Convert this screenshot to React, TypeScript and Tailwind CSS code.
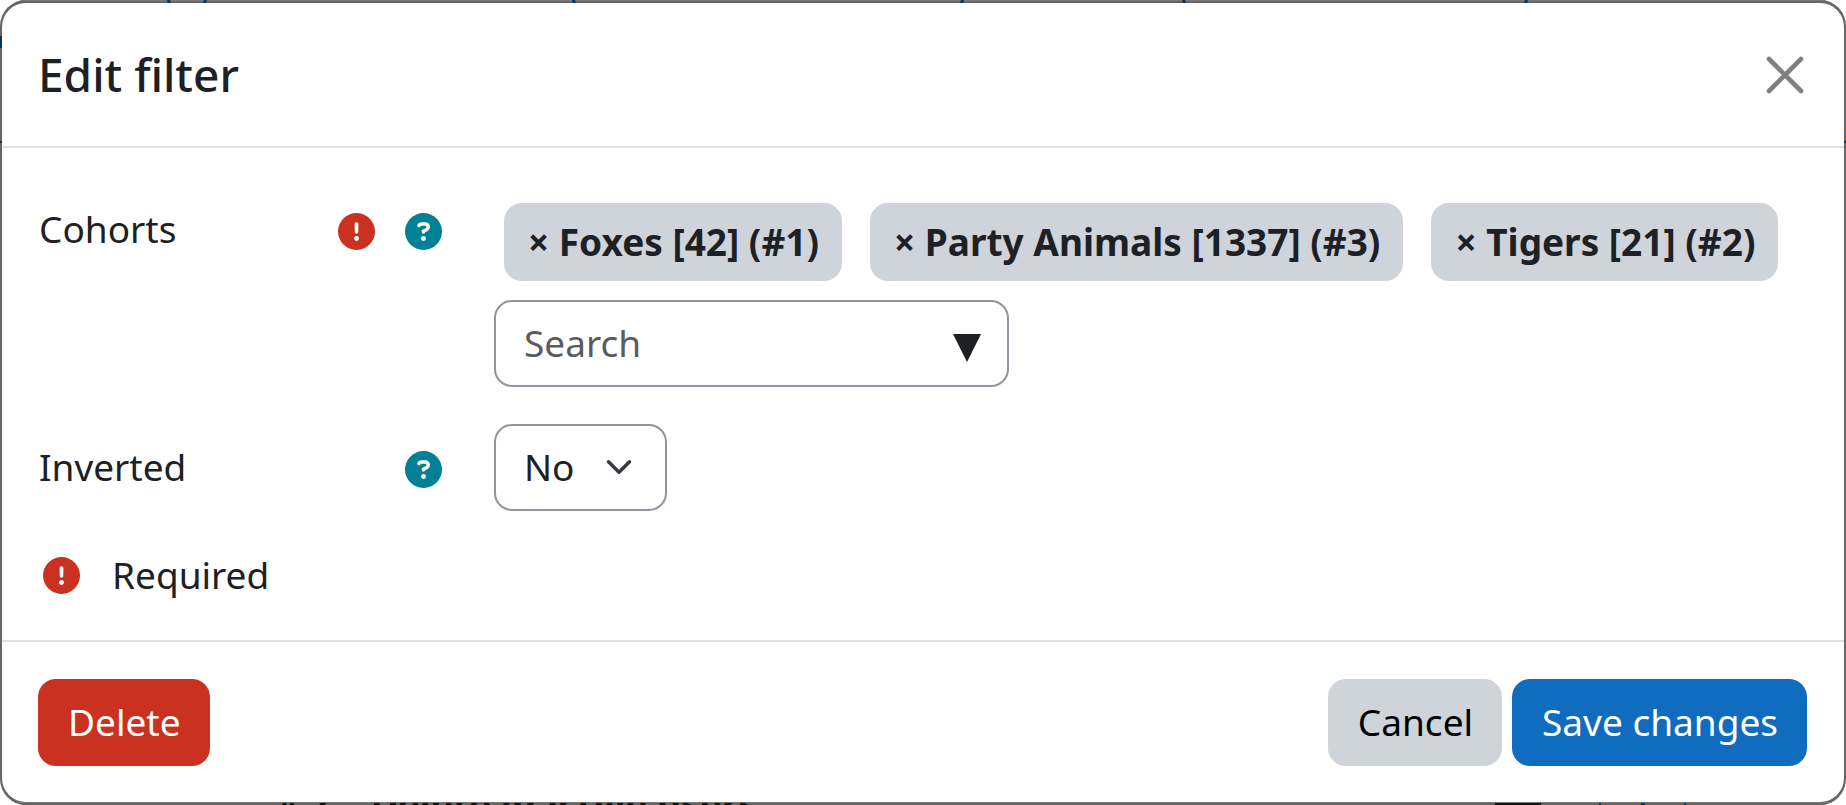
import React, { useState } from 'react';
import clsx from 'clsx';

interface Cohort {
  id: number;
  label: string;
}

const initialCohorts: Cohort[] = [
  { id: 1, label: 'Foxes [42] (#1)' },
  { id: 3, label: 'Party Animals [1337] (#3)' },
  { id: 2, label: 'Tigers [21] (#2)' },
];

function RequiredIcon() {
  return (
    <svg viewBox="0 0 512 512" className="size-[37px] shrink-0" role="img" aria-label="Required">
      <circle cx="256" cy="256" r="256" fill="#ca3120" />
      <path
        fill="#fff"
        d="M256 128c15 0 27 11 27 26l-3 110c0 13-11 24-24 24s-24-11-24-24l-3-110c0-15 12-26 27-26zM256 318a34 34 0 1 1 0 68 34 34 0 1 1 0-68z"
      />
    </svg>
  );
}

function HelpButton({ label }: { label: string }) {
  return (
    <button type="button" aria-label={label} className="shrink-0 cursor-pointer">
      <svg viewBox="0 0 512 512" className="block size-[37px]">
        <circle cx="256" cy="256" r="256" fill="#008196" />
        <path
          fill="none"
          stroke="#fff"
          strokeWidth="48"
          strokeLinecap="round"
          d="M192 174c5-13 15-22 31-22h59c22 0 40 18 40 40 0 16-8 28-20 35l-46 27v10"
        />
        <circle cx="256" cy="352" r="34" fill="#fff" />
      </svg>
    </button>
  );
}

function ActionButton({ className, children }: { className: string; children: React.ReactNode }) {
  return (
    <button
      type="button"
      className={clsx('rounded-[18px] pt-[15px] pr-[29px] pb-[17px] pl-[30px] leading-[55px] cursor-pointer', className)}
    >
      {children}
    </button>
  );
}

// Bits of the dimmed page that peek out around the dialog
function PageAbove() {
  return (
    <svg viewBox="0 0 1846 3" preserveAspectRatio="none" className="block h-[3px] w-full" aria-hidden="true">
      <path fill="#666" d="M0 0h1846v3H0z" />
      <path fill="#7c7c7c" d="M0 0h1846v1H0z" />
      <path stroke="#0b3558" strokeWidth="3" d="M168 0l2 3M206 0l-2 3M573 0l2 3M963 0l-2 3M1183 0l2 3M1527 0l-2 3" />
    </svg>
  );
}

function PageBelow() {
  return (
    <div aria-hidden="true" className="relative h-[3px] overflow-hidden border-t border-[#777] bg-[#666]">
      <div className="flex h-full items-center gap-10 pl-[276px] font-bold whitespace-nowrap text-[#111]">
        <span>#&nbsp;7</span>
        <span>Delete inactive users</span>
      </div>
      <span className="absolute inset-y-0 left-[81%] w-[46px] bg-[#111]" />
      <span className="absolute inset-y-0 left-[86.6%] w-[2px] bg-[#0b3558]" />
      <span className="absolute inset-y-0 left-[88.9%] w-1 bg-[#0b3558]" />
      <span className="absolute inset-y-0 left-[91.2%] w-[2px] bg-[#0b3558]" />
    </div>
  );
}

export default function App() {
  const [cohorts, setCohorts] = useState(initialCohorts);
  const [search, setSearch] = useState('');
  const [inverted, setInverted] = useState('no');

  const removeCohort = (id: number) => {
    setCohorts((prev) => prev.filter((c) => c.id !== id));
  };

  return (
    <div className="min-h-screen bg-white font-['Noto_Sans',sans-serif] text-[37px] leading-[56px] text-[#1d2125]">
      <div className="relative overflow-hidden rounded-[26px] bg-[#666]">
        <PageAbove />
        <span className="absolute top-9 left-0 h-3 w-[2px] bg-[#0b3558]" />
        <span className="absolute inset-x-0 top-[141px] h-[2px] bg-[#0b3558]" />

        <div role="dialog" aria-labelledby="dialog-title" className="relative mx-[2px] rounded-[24px] bg-white">
          <header className="flex items-center justify-between border-b-2 border-[#dee2e6] pt-9 pr-10 pb-9 pl-9">
            <h1 id="dialog-title" className="text-[46px] leading-[71px] font-medium">
              Edit filter
            </h1>
            <button type="button" aria-label="Close" className="cursor-pointer text-[#808080]">
              <svg viewBox="0 0 38 38" className="block size-[38px]" fill="none" stroke="currentColor" strokeWidth="4.600" strokeLinecap="round">
                <path d="M3 3l32 32M35 3L3 35" />
              </svg>
            </button>
          </header>

          <form className="px-[37px] pt-[53px] pb-[37px]">
            <div className="mb-[37px] flex">
              <div className="flex w-[455px] shrink-0 items-start pr-[52px]">
                <label htmlFor="cohorts">Cohorts</label>
                <div className="ml-auto flex gap-[30px] pt-3">
                  <RequiredIcon />
                  <HelpButton label="Help with Cohorts" />
                </div>
              </div>
              <div className="min-w-0 flex-1 pt-[2px]">
                <ul className="mb-[19px] flex flex-wrap gap-x-7 gap-y-5 pl-[10px]">
                  {cohorts.map((c) => (
                    <li key={c.id}>
                      <button
                        type="button"
                        onClick={() => removeCohort(c.id)}
                        className="block rounded-[18px] bg-[#ced4da] py-[11px] pr-[23px] pl-6 font-bold cursor-pointer"
                      >
                        × {c.label}
                      </button>
                    </li>
                  ))}
                </ul>
                <div className="relative w-[515px]">
                  <input
                    id="cohorts"
                    type="text"
                    placeholder="Search"
                    value={search}
                    onChange={(e) => setSearch(e.target.value)}
                    className="block h-[87px] w-full rounded-[18px] border-2 border-[#8f959e] pr-20 pb-[2px] pl-7 placeholder:text-[#595c5f]"
                  />
                  <svg viewBox="0 0 28 30" className="pointer-events-none absolute top-[33px] right-7 h-[30px] w-7">
                    <path d="M0 1h28L14 29z" fill="#1d2125" />
                  </svg>
                </div>
              </div>
            </div>

            <div className="mb-9 flex">
              <div className="flex w-[455px] shrink-0 items-start pt-[15px] pr-[52px]">
                <label htmlFor="inverted">Inverted</label>
                <div className="ml-auto pt-[7px]">
                  <HelpButton label="Help with Inverted" />
                </div>
              </div>
              <div className="relative">
                <select
                  id="inverted"
                  value={inverted}
                  onChange={(e) => setInverted(e.target.value)}
                  className="block h-[87px] w-[173px] appearance-none rounded-[18px] border-2 border-[#8f959e] bg-white pr-[60px] pb-[2px] pl-7"
                >
                  <option value="no">No</option>
                  <option value="yes">Yes</option>
                </select>
                <svg viewBox="0 0 16 16" className="pointer-events-none absolute top-[29px] right-[34px] size-7" fill="none" stroke="#343a40" strokeWidth="2" strokeLinecap="round" strokeLinejoin="round">
                  <path d="m2 5 6 6 6-6" />
                </svg>
              </div>
            </div>

            <div className="flex items-center gap-8 pl-1">
              <RequiredIcon />
              <span>Required</span>
            </div>
          </form>

          <footer className="flex items-center gap-[10px] border-t-2 border-[#dee2e6] pt-[37px] pr-[37px] pb-9 pl-9">
            <ActionButton className="mr-auto bg-[#ca3120] text-white">Delete</ActionButton>
            <ActionButton className="bg-[#ced4da] text-black">Cancel</ActionButton>
            <ActionButton className="bg-[#0f6cbf] text-white">Save changes</ActionButton>
          </footer>
        </div>

        <PageBelow />
      </div>
    </div>
  );
}
